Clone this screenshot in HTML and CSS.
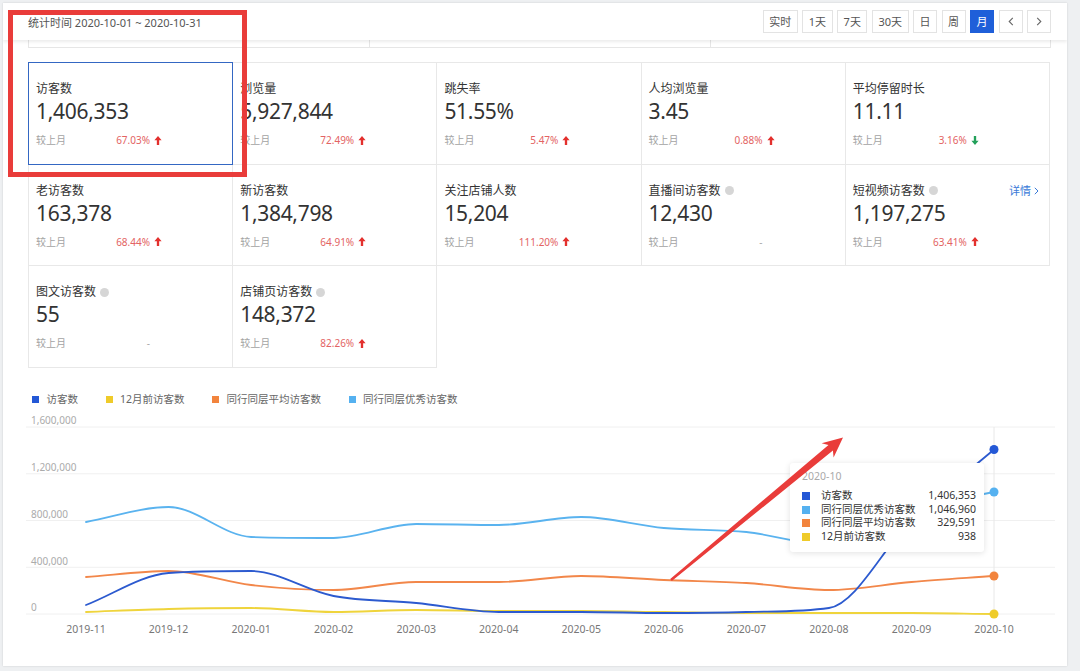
FILE: index.html
```html
<!DOCTYPE html>
<html lang="zh-CN">
<head>
<meta charset="utf-8">
<title>访客数据</title>
<link rel="stylesheet" href="styles.css">
</head>
<body>
<div class="page">
  <header class="topbar">
    <div class="period">统计时间 2020-10-01 ~ 2020-10-31</div>
    <div class="tabs">
      <button class="tab">实时</button>
      <button class="tab">1天</button>
      <button class="tab">7天</button>
      <button class="tab">30天</button>
      <button class="tab">日</button>
      <button class="tab">周</button>
      <button class="tab on">月</button>
      <button class="tab icon"><svg width="6" height="9" viewBox="0 0 6 9"><path d="M4.8 0.8 L1.2 4.5 L4.8 8.2" fill="none" stroke="#666" stroke-width="1.1"/></svg></button>
      <button class="tab icon"><svg width="6" height="9" viewBox="0 0 6 9"><path d="M1.2 0.8 L4.8 4.5 L1.2 8.2" fill="none" stroke="#666" stroke-width="1.1"/></svg></button>
    </div>
  </header>
  <div class="ghost"><span></span><span></span><span></span></div>

  <div class="metrics">
    <div class="cell active">
      <div class="label">访客数</div>
      <div class="value">1,406,353</div>
      <div class="cmp"><span class="cmp-l">较上月</span><span class="cmp-v">67.03%</span><svg class="arr" viewBox="0 0 8 10"><path d="M4 0 L8 4.6 H5.3 V10 H2.7 V4.6 H0 Z"/></svg></div>
    </div>
    <div class="cell">
      <div class="label">浏览量</div>
      <div class="value">5,927,844</div>
      <div class="cmp"><span class="cmp-l">较上月</span><span class="cmp-v">72.49%</span><svg class="arr" viewBox="0 0 8 10"><path d="M4 0 L8 4.6 H5.3 V10 H2.7 V4.6 H0 Z"/></svg></div>
    </div>
    <div class="cell">
      <div class="label">跳失率</div>
      <div class="value">51.55%</div>
      <div class="cmp"><span class="cmp-l">较上月</span><span class="cmp-v">5.47%</span><svg class="arr" viewBox="0 0 8 10"><path d="M4 0 L8 4.6 H5.3 V10 H2.7 V4.6 H0 Z"/></svg></div>
    </div>
    <div class="cell">
      <div class="label">人均浏览量</div>
      <div class="value">3.45</div>
      <div class="cmp"><span class="cmp-l">较上月</span><span class="cmp-v">0.88%</span><svg class="arr" viewBox="0 0 8 10"><path d="M4 0 L8 4.6 H5.3 V10 H2.7 V4.6 H0 Z"/></svg></div>
    </div>
    <div class="cell">
      <div class="label">平均停留时长</div>
      <div class="value">11.11</div>
      <div class="cmp"><span class="cmp-l">较上月</span><span class="cmp-v">3.16%</span><svg class="arr down" viewBox="0 0 8 10"><path d="M4 10 L8 5.4 H5.3 V0 H2.7 V5.4 H0 Z"/></svg></div>
    </div>

    <div class="cell">
      <div class="label">老访客数</div>
      <div class="value">163,378</div>
      <div class="cmp"><span class="cmp-l">较上月</span><span class="cmp-v">68.44%</span><svg class="arr" viewBox="0 0 8 10"><path d="M4 0 L8 4.6 H5.3 V10 H2.7 V4.6 H0 Z"/></svg></div>
    </div>
    <div class="cell">
      <div class="label">新访客数</div>
      <div class="value">1,384,798</div>
      <div class="cmp"><span class="cmp-l">较上月</span><span class="cmp-v">64.91%</span><svg class="arr" viewBox="0 0 8 10"><path d="M4 0 L8 4.6 H5.3 V10 H2.7 V4.6 H0 Z"/></svg></div>
    </div>
    <div class="cell">
      <div class="label">关注店铺人数</div>
      <div class="value">15,204</div>
      <div class="cmp"><span class="cmp-l">较上月</span><span class="cmp-v">111.20%</span><svg class="arr" viewBox="0 0 8 10"><path d="M4 0 L8 4.6 H5.3 V10 H2.7 V4.6 H0 Z"/></svg></div>
    </div>
    <div class="cell">
      <div class="label">直播间访客数<i class="tip"></i></div>
      <div class="value">12,430</div>
      <div class="cmp"><span class="cmp-l">较上月</span><span class="cmp-v dash">-</span></div>
    </div>
    <div class="cell">
      <div class="label">短视频访客数<i class="tip"></i><a class="more">详情<svg width="5" height="8" viewBox="0 0 5 8"><path d="M0.8 0.8 L4 4 L0.8 7.2" fill="none" stroke="#3a7ad8" stroke-width="1"/></svg></a></div>
      <div class="value">1,197,275</div>
      <div class="cmp"><span class="cmp-l">较上月</span><span class="cmp-v">63.41%</span><svg class="arr" viewBox="0 0 8 10"><path d="M4 0 L8 4.6 H5.3 V10 H2.7 V4.6 H0 Z"/></svg></div>
    </div>

    <div class="cell">
      <div class="label">图文访客数<i class="tip"></i></div>
      <div class="value">55</div>
      <div class="cmp"><span class="cmp-l">较上月</span><span class="cmp-v dash">-</span></div>
    </div>
    <div class="cell">
      <div class="label">店铺页访客数<i class="tip"></i></div>
      <div class="value">148,372</div>
      <div class="cmp"><span class="cmp-l">较上月</span><span class="cmp-v">82.26%</span><svg class="arr" viewBox="0 0 8 10"><path d="M4 0 L8 4.6 H5.3 V10 H2.7 V4.6 H0 Z"/></svg></div>
    </div>
  </div>

  <div class="legend">
    <span class="lg"><i class="c-blue"></i>访客数</span>
    <span class="lg"><i class="c-yellow"></i>12月前访客数</span>
    <span class="lg"><i class="c-orange"></i>同行同层平均访客数</span>
    <span class="lg"><i class="c-sky"></i>同行同层优秀访客数</span>
  </div>

  <svg class="chart" width="1064" height="257" viewBox="3 406 1064 257">
    <g class="grid">
      <line x1="26" x2="1055" y1="427" y2="427"/>
      <line x1="26" x2="1055" y1="473.75" y2="473.75"/>
      <line x1="26" x2="1055" y1="520.5" y2="520.5"/>
      <line x1="26" x2="1055" y1="567.25" y2="567.25"/>
      <line x1="26" x2="1055" y1="614" y2="614"/>
    </g>
    <g class="ylab">
      <text x="31" y="423.5">1,600,000</text>
      <text x="31" y="470.5">1,200,000</text>
      <text x="31" y="517.5">800,000</text>
      <text x="31" y="564.5">400,000</text>
      <text x="31" y="610.5">0</text>
    </g>
    <g class="xlab">
      <text x="86" y="633">2019-11</text>
      <text x="168.5" y="633">2019-12</text>
      <text x="251.1" y="633">2020-01</text>
      <text x="333.6" y="633">2020-02</text>
      <text x="416.2" y="633">2020-03</text>
      <text x="498.7" y="633">2020-04</text>
      <text x="581.3" y="633">2020-05</text>
      <text x="663.8" y="633">2020-06</text>
      <text x="746.4" y="633">2020-07</text>
      <text x="828.9" y="633">2020-08</text>
      <text x="911.5" y="633">2020-09</text>
      <text x="994" y="633">2020-10</text>
    </g>
    <line class="pointer" x1="994" x2="994" y1="427" y2="614"/>
    <path id="s-sky" class="ln" stroke="#5ab3ef"/>
    <path id="s-orange" class="ln" stroke="#f2874a"/>
    <path id="s-yellow" class="ln" stroke="#efd43c"/>
    <path id="s-blue" class="ln" stroke="#2c5acf"/>
    <circle cx="994" cy="492" r="4.5" fill="#55b1f0"/>
    <circle cx="994" cy="576" r="4.5" fill="#f2843d"/>
    <circle cx="994" cy="614" r="4.5" fill="#efcc2a"/>
    <circle cx="994" cy="449.5" r="4.5" fill="#2458d6"/>
  </svg>

  <div class="tooltip">
    <div class="tt-title">2020-10</div>
    <div class="tt-row"><i class="c-blue"></i><span class="tt-name">访客数</span><span class="tt-val">1,406,353</span></div>
    <div class="tt-row"><i class="c-sky"></i><span class="tt-name">同行同层优秀访客数</span><span class="tt-val">1,046,960</span></div>
    <div class="tt-row"><i class="c-orange"></i><span class="tt-name">同行同层平均访客数</span><span class="tt-val">329,591</span></div>
    <div class="tt-row"><i class="c-yellow"></i><span class="tt-name">12月前访客数</span><span class="tt-val">938</span></div>
  </div>

  <div class="mark-box"></div>
  <svg class="mark-arrow" width="1064" height="663" viewBox="3 3 1064 663">
    <polygon points="843,437.5 833.6,457.6 832.9,450.4 671.8,581 670.2,579 828.5,445 821.6,443.2" fill="#e93c3a"/>
  </svg>
</div>
<script src="script.js"></script>
</body>
</html>
```

FILE: styles.css
```css
* { box-sizing: border-box; }
html, body { margin: 0; padding: 0; }
body {
  width: 1080px;
  height: 671px;
  overflow: hidden;
  background: #eef0f2;
  font-family: "Noto Sans", "Noto Sans CJK SC", sans-serif;
  color: #333;
}
.page {
  position: relative;
  margin: 3px 0 0 3px;
  width: 1064px;
  height: 663px;
  background: #fff;
  box-shadow: 0 0 2px rgba(0, 0, 0, 0.14);
  overflow: hidden;
}

/* top bar */
.topbar {
  position: relative;
  z-index: 2;
  height: 37px;
  display: flex;
  align-items: center;
  justify-content: space-between;
  padding: 0 16px 0 25px;
  background: #fff;
  box-shadow: 0 2px 3px rgba(0, 0, 0, 0.08);
}
.period { font-size: 11px; color: #555; }
.tabs { display: flex; gap: 4.5px; }
.tab {
  height: 23px;
  padding: 0 5.5px;
  border: 1px solid #e3e3e3;
  background: #fff;
  color: #555;
  font-family: inherit;
  font-size: 11px;
  line-height: 1;
  display: flex;
  align-items: center;
  justify-content: center;
}
.tab.icon { width: 24px; padding: 0; }
.tab.on { background: #1f5fd9; border-color: #1f5fd9; color: #fff; }

.ghost {
  margin: 0 16px 0 25px;
  height: 8px;
  display: grid;
  grid-template-columns: repeat(3, 1fr);
  border: 1px solid #e6e6e6;
  border-top: none;
}
.ghost span + span { border-left: 1px solid #e6e6e6; }

/* metric grid */
.metrics {
  margin: 14px 0 0 25px;
  width: 1022px;
  display: grid;
  grid-template-columns: repeat(5, 1fr);
  grid-auto-rows: 101.5px;
  border-top: 1px solid #e8e8e8;
  border-left: 1px solid #e8e8e8;
}
.cell {
  position: relative;
  padding: 18px 0 0 7px;
  border-right: 1px solid #e8e8e8;
  border-bottom: 1px solid #e8e8e8;
}
.cell.active::after {
  content: "";
  position: absolute;
  top: -1px; left: -1px; right: -1px; bottom: -1px;
  border: 1.5px solid #3467c3;
}
.label {
  display: flex;
  align-items: center;
  height: 16px;
  font-size: 12px;
  line-height: 16px;
  color: #333;
  padding-right: 10px;
}
.tip {
  width: 9px;
  height: 9px;
  border-radius: 50%;
  background: #d6d6d6;
  margin-left: 4px;
}
.more {
  margin-left: auto;
  display: flex;
  align-items: center;
  gap: 3px;
  font-size: 11px;
  color: #3a7ad8;
}
.value {
  margin-top: 2px;
  font-size: 21px;
  line-height: 24px;
  letter-spacing: -0.3px;
  color: #333;
}
.cmp {
  margin-top: 10px;
  height: 14px;
  display: flex;
  align-items: center;
  font-size: 10px;
  line-height: 14px;
}
.cmp-l { width: 60px; color: #a3a3a3; }
.cmp-v { width: 54px; text-align: right; color: #e36363; }
.cmp-v.dash { color: #aaa; }
.arr { width: 8px; height: 9px; margin-left: 4px; fill: #e3302d; }
.arr.down { fill: #23a05a; }

/* legend */
.legend {
  display: flex;
  gap: 27.5px;
  margin: 24.5px 0 0 29px;
  height: 14px;
  font-size: 10.5px;
  line-height: 14px;
  color: #666;
}
.lg { display: flex; align-items: center; gap: 7.5px; }
.lg i { width: 7px; height: 7px; display: block; }
.c-blue { background: #2458d6; }
.c-yellow { background: #efcb2a; }
.c-orange { background: #f2843d; }
.c-sky { background: #55b1f0; }

/* chart */
.chart { display: block; }
.grid line { stroke: #f0f0f0; stroke-width: 1; }
.ylab text { font-size: 10px; fill: #ababab; font-family: "Noto Sans", sans-serif; }
.xlab text { font-size: 10.5px; fill: #777; text-anchor: middle; font-family: "Noto Sans", sans-serif; }
.pointer { stroke: #e8e8e8; stroke-width: 1; }
.ln { fill: none; stroke-width: 1.8; stroke-linejoin: round; stroke-linecap: round; }

/* tooltip */
.tooltip {
  position: absolute;
  left: 787px;
  top: 460px;
  z-index: 3;
  width: 194px;
  height: 89px;
  padding: 6px 8px 0 12px;
  background: #fff;
  border-radius: 3px;
  box-shadow: 0 1px 6px rgba(0, 0, 0, 0.12);
  font-size: 10.5px;
  color: #333;
}
.tt-title { height: 14px; line-height: 14px; color: #aaa; margin-bottom: 6px; }
.tt-row { display: flex; align-items: center; height: 13.7px; line-height: 13.7px; }
.tt-row i { width: 8px; height: 8px; display: block; margin-right: 11px; }
.tt-name { flex: 1; }
.tt-val { text-align: right; }

/* annotation overlays */
.mark-box {
  position: absolute;
  left: 5px;
  top: 7px;
  width: 239px;
  height: 167px;
  border: 5px solid #e93c3a;
  z-index: 5;
}
.mark-arrow {
  position: absolute;
  left: 0;
  top: 0;
  z-index: 6;
  pointer-events: none;
}
```

FILE: script.js
```js
(function () {
  var step = 82.55;
  var x0 = 86;
  var data = {
    "s-sky":    [522, 507, 537, 538, 524, 525, 517, 528, 532, 545, 510, 492],
    "s-orange": [577, 571, 585, 590, 582, 582, 576, 580, 583, 590, 582, 576],
    "s-yellow": [612, 609, 608, 612, 610, 611, 611, 612, 613, 613, 613, 614],
    "s-blue":   [605, 573, 571, 596, 603, 612, 612, 613, 612, 608, 520, 449.5]
  };
  function tangents(y) {
    var n = y.length, d = [], m = [];
    for (var i = 0; i < n - 1; i++) d.push(y[i + 1] - y[i]);
    for (var j = 0; j < n; j++) {
      if (j === 0) { m.push(d[0]); continue; }
      if (j === n - 1) { m.push(d[n - 2]); continue; }
      var a = d[j - 1], b = d[j];
      if (a * b <= 0) { m.push(0); continue; }
      var t = (a + b) / 2;
      var lim = 3 * Math.min(Math.abs(a), Math.abs(b));
      if (Math.abs(t) > lim) t = t > 0 ? lim : -lim;
      m.push(t);
    }
    return m;
  }
  function smooth(y) {
    var m = tangents(y);
    var f = function (v) { return v.toFixed(1); };
    var d = "M" + f(x0) + "," + f(y[0]);
    for (var i = 0; i < y.length - 1; i++) {
      var xa = x0 + step * i, xb = xa + step;
      d += " C" + f(xa + step / 3) + "," + f(y[i] + m[i] / 3) + " " +
           f(xb - step / 3) + "," + f(y[i + 1] - m[i + 1] / 3) + " " +
           f(xb) + "," + f(y[i + 1]);
    }
    return d;
  }
  Object.keys(data).forEach(function (id) {
    document.getElementById(id).setAttribute("d", smooth(data[id]));
  });
})();
```
